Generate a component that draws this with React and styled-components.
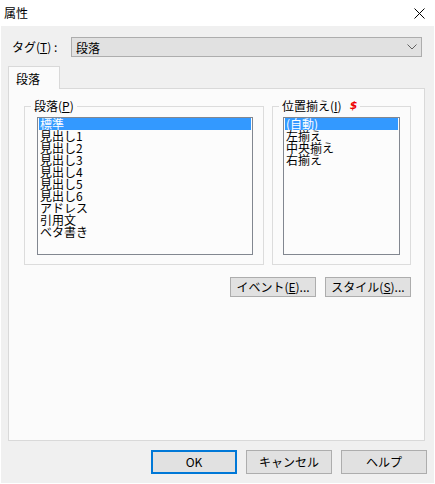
import React from "react";
import styled, { createGlobalStyle } from "styled-components";

const GlobalStyle = createGlobalStyle`
  html, body { margin: 0; padding: 0; background: #ffffff; }
  body { font-family: "Noto Sans CJK JP", "Noto Sans", sans-serif; font-size: 12px; color: #000; }
  * { box-sizing: border-box; }
`;

const Window = styled.div`
  width: 435px;
  height: 484px;
  display: flex;
  flex-direction: column;
  background: #ffffff;
  overflow: hidden;
`;

const TitleBar = styled.div`
  height: 26px;
  flex: none;
  display: flex;
  align-items: center;
  justify-content: space-between;
  padding: 0 10px 0 4px;
`;

const Title = styled.span`
  font-size: 12px;
  line-height: 12px;
  color: #000;
`;

const Body = styled.div`
  flex: 1;
  margin: 0 1px 1px;
  background: #f0f0f0;
  display: flex;
  flex-direction: column;
  padding-top: 11px;
`;

const TagRow = styled.div`
  display: flex;
  align-items: center;
  height: 20px;
  padding-left: 11px;
`;

const TagLabel = styled.span`
  width: 59px;
  font-size: 12px;
  line-height: 12px;
`;

const Combo = styled.div`
  width: 351px;
  height: 20px;
  background: #e1e1e1;
  border: 1px solid #adadad;
  display: flex;
  align-items: center;
  justify-content: space-between;
  padding: 0 4px 0 4px;
  font-size: 12px;
`;

const TabStrip = styled.div`
  margin-top: 9px;
  padding-left: 7px;
  display: flex;
`;

const Tab = styled.div`
  width: 52px;
  height: 23px;
  border: 1px solid #d9d9d9;
  border-bottom: none;
  background: #fbfbfb;
  margin-bottom: -1px;
  position: relative;
  z-index: 1;
  display: flex;
  align-items: center;
  padding-left: 7px;
  font-size: 12px;
`;

const Panel = styled.div`
  margin-left: 7px;
  width: 417px;
  height: 353px;
  border: 1px solid #d9d9d9;
  background: #fbfbfb;
  padding: 11px 13px 0 15px;
  display: flex;
  flex-direction: column;
`;

const Groups = styled.div`
  display: flex;
  gap: 8px;
`;

const Group = styled.fieldset`
  margin: 0;
  padding: 0;
  width: ${(p) => p.$w}px;
  height: 165px;
  border: 1px solid #dcdcdc;
  min-width: 0;
`;

const Legend = styled.legend`
  margin-left: 6px;
  padding: 0 3px;
  font-size: 12px;
  line-height: 12px;
  display: flex;
  align-items: center;
  gap: 8px;
`;

const U = styled.span`
  text-decoration: underline;
  text-underline-offset: 1px;
`;

const Listbox = styled.div`
  margin: 5px 0 0 ${(p) => p.$ml}px;
  width: ${(p) => p.$w}px;
  height: 138px;
  border: 1px solid #828790;
  background: #fcfcfc;
  padding: 0 1px;
  display: flex;
  flex-direction: column;
`;

const Item = styled.div`
  height: 12px;
  line-height: 12px;
  font-size: 12px;
  padding-left: 1px;
  white-space: nowrap;
  background: ${(p) => (p.$sel ? "#3399ff" : "transparent")};
  color: ${(p) => (p.$sel ? "#ffffff" : "#000000")};
`;

const RedMark = styled.span`
  color: #ee0000;
  font-weight: bold;
  font-style: italic;
  font-family: "DejaVu Sans", sans-serif;
  font-size: 11px;
  line-height: 12px;
`;

const ButtonRow = styled.div`
  display: flex;
  justify-content: flex-end;
  gap: 9px;
  margin-top: 12px;
`;

const Button = styled.button`
  width: 86px;
  height: ${(p) => p.$h}px;
  background: #e1e1e1;
  border: ${(p) => (p.$default ? "2px solid #0078d7" : "1px solid #adadad")};
  font-family: "Noto Sans CJK JP", "Noto Sans", sans-serif;
  font-size: 12px;
  line-height: 12px;
  color: #000;
  padding: 0;
  display: flex;
  align-items: center;
  justify-content: center;
`;

const Footer = styled.div`
  display: flex;
  justify-content: flex-end;
  gap: 9px;
  margin-top: 9px;
  padding-right: 7px;
`;

const paragraphs = ["標準", "見出し1", "見出し2", "見出し3", "見出し4", "見出し5", "見出し6", "アドレス", "引用文", "ベタ書き"];
const aligns = ["(自動)", "左揃え", "中央揃え", "右揃え"];

export default function App() {
  return (
    <>
      <GlobalStyle />
      <Window>
        <TitleBar>
          <Title>属性</Title>
          <svg width="11" height="11" viewBox="0 0 11 11">
            <path d="M0.5 0.5 L10.5 10.5 M10.5 0.5 L0.5 10.5" stroke="#000" strokeWidth="1" fill="none" />
          </svg>
        </TitleBar>
        <Body>
          <TagRow>
            <TagLabel>
              タグ(<U>T</U>) :
            </TagLabel>
            <Combo>
              <span>段落</span>
              <svg width="10" height="6" viewBox="0 0 10 6">
                <path d="M0.5 0.5 L5 5 L9.5 0.5" stroke="#606060" strokeWidth="1" fill="none" />
              </svg>
            </Combo>
          </TagRow>
          <TabStrip>
            <Tab>段落</Tab>
          </TabStrip>
          <Panel>
            <Groups>
              <Group $w={240}>
                <Legend>
                  <span>
                    段落(<U>P</U>)
                  </span>
                </Legend>
                <Listbox $w={216} $ml={12}>
                  {paragraphs.map((t, i) => (
                    <Item key={t} $sel={i === 0}>
                      {t}
                    </Item>
                  ))}
                </Listbox>
              </Group>
              <Group $w={139}>
                <Legend>
                  <span>
                    位置揃え(<U>I</U>)
                  </span>
                  <RedMark>$</RedMark>
                </Legend>
                <Listbox $w={117} $ml={10}>
                  {aligns.map((t, i) => (
                    <Item key={t} $sel={i === 0}>
                      {t}
                    </Item>
                  ))}
                </Listbox>
              </Group>
            </Groups>
            <ButtonRow>
              <Button $h={20}>
                イベント(<U>E</U>)...
              </Button>
              <Button $h={20}>
                スタイル(<U>S</U>)...
              </Button>
            </ButtonRow>
          </Panel>
          <Footer>
            <Button $h={24} $default>
              OK
            </Button>
            <Button $h={24}>キャンセル</Button>
            <Button $h={24}>ヘルプ</Button>
          </Footer>
        </Body>
      </Window>
    </>
  );
}
